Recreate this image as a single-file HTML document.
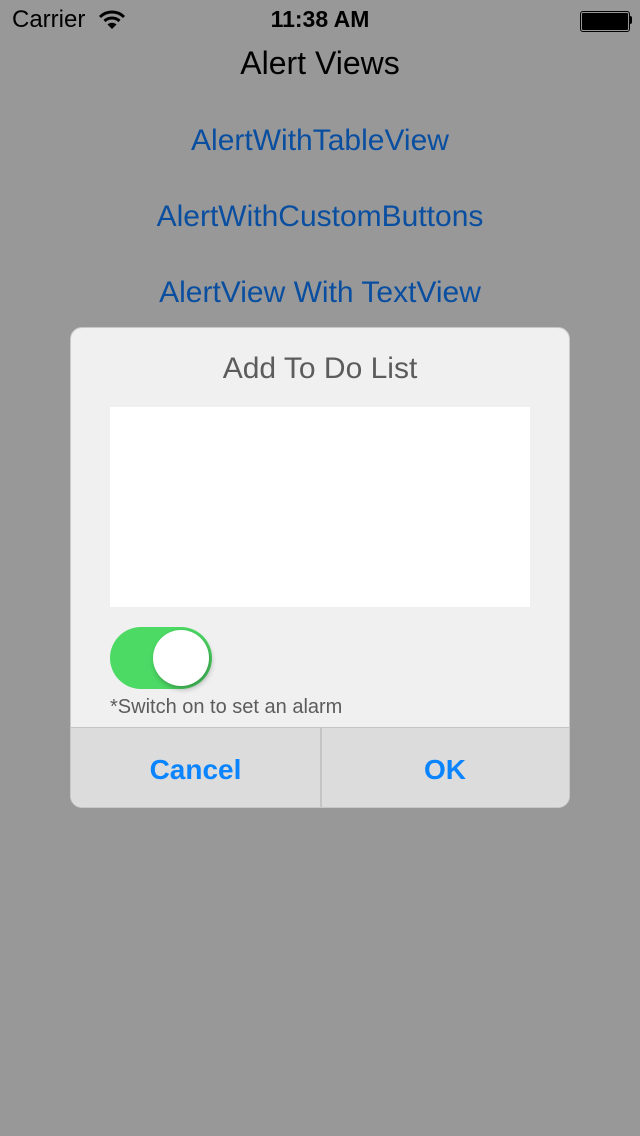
<!DOCTYPE html>
<html><head><style>
body{margin:0;width:640px;height:1136px;background:#989898;font-family:"Liberation Sans",sans-serif;position:relative;overflow:hidden}
.a{position:absolute}
.link{position:absolute;left:0;width:640px;text-align:center;color:#0a4ea0;font-size:30px}
</style></head><body>
<div class="a" style="left:12px;top:6px;font-size:24px;color:#000">Carrier</div>
<svg class="a" style="left:98px;top:10px" width="28" height="20" viewBox="0 0 28 20"><path d="M2 7 A17 17 0 0 1 26 7" stroke="#000" stroke-width="3" fill="none"/><path d="M6.5 11 A11 11 0 0 1 21.5 11" stroke="#000" stroke-width="3" fill="none"/><path d="M14 19 L9.5 14.5 A6.5 6.5 0 0 1 18.5 14.5Z" fill="#000"/></svg>
<div class="a" style="left:0;width:640px;text-align:center;top:6px;font-size:23px;font-weight:bold;color:#000">11:38 AM</div>
<div class="a" style="left:580px;top:11px;width:46px;height:17px;border:1.5px solid #000;border-radius:3px;padding:1px;box-sizing:content-box"><div style="width:100%;height:100%;background:#000;border-radius:1px"></div></div>
<div class="a" style="left:629px;top:16px;width:3px;height:8px;background:#000;border-radius:0 2px 2px 0"></div>
<div class="a" style="left:0;width:640px;text-align:center;top:45px;font-size:32px;color:#000">Alert Views</div>
<div class="link" style="top:124px">AlertWithTableView</div>
<div class="link" style="top:200px">AlertWithCustomButtons</div>
<div class="link" style="top:276px">AlertView With TextView</div>
<div class="a" style="left:70px;top:327px;width:498px;height:479px;background:#f0f0f0;border:1.5px solid #c8c8c8;border-radius:12px;overflow:hidden">
 <div class="a" style="left:0;width:498px;top:24px;text-align:center;font-size:30px;color:#5c5c5c">Add To Do List</div>
 <div class="a" style="left:39px;top:79px;width:420px;height:200px;background:#fff"></div>
 <div class="a" style="left:39px;top:299px;width:102px;height:62px;border-radius:31px;background:#4cd964"></div>
 <div class="a" style="left:82px;top:302px;width:56px;height:56px;border-radius:50%;background:#fff;box-shadow:2px 3px 6px rgba(0,0,0,.3)"></div>
 <div class="a" style="left:39px;top:368px;font-size:20px;color:#5c5c5c">*Switch on to set an alarm</div>
 <div class="a" style="left:0;top:399px;width:498px;height:82px;background:#dcdcdc;border-top:1.5px solid #c4c4c4"></div>
 <div class="a" style="left:249px;top:400px;width:1.5px;height:82px;background:#c4c4c4"></div>
 <div class="a" style="left:0;width:249px;top:426px;text-align:center;font-size:28px;font-weight:bold;color:#0a84ff">Cancel</div>
 <div class="a" style="left:250px;width:248px;top:426px;text-align:center;font-size:28px;font-weight:bold;color:#0a84ff">OK</div>
</div>
</body></html>
